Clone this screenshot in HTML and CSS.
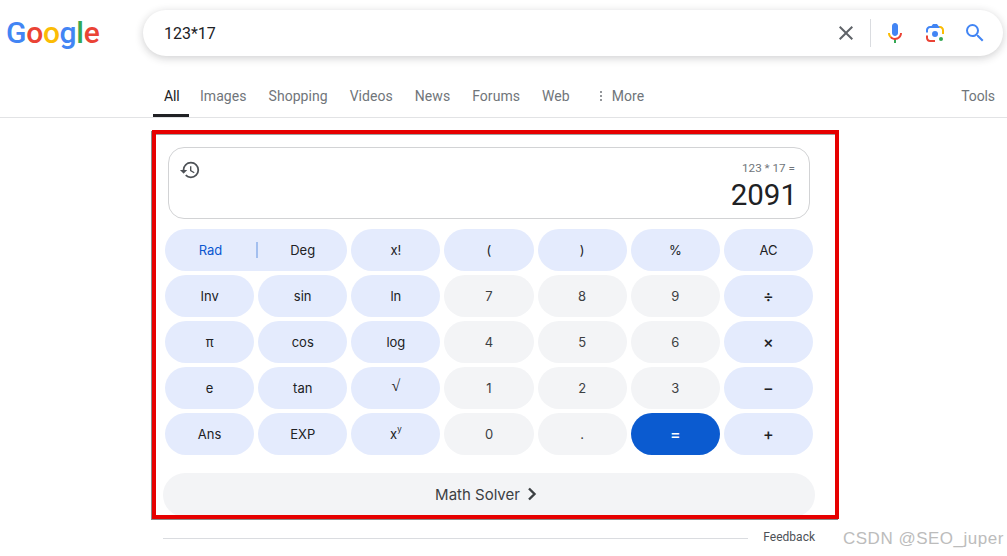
FILE: index.html
```html
<!DOCTYPE html>
<html lang="en">
<head>
<meta charset="utf-8">
<title>123*17 - Google Search</title>
<link rel="stylesheet" href="styles.css">
</head>
<body>
<header class="header">
  <div class="logo"><span class="lb">G</span><span class="lr">o</span><span class="ly">o</span><span class="lb">g</span><span class="lg">l</span><span class="lr">e</span></div>
  <div class="search">
    <span class="query">123*17</span>
    <svg class="icon close" viewBox="0 0 24 24"><path fill="#5f6368" d="M19 6.41L17.59 5 12 10.59 6.41 5 5 6.41 10.59 12 5 17.59 6.41 19 12 13.41 17.59 19 19 17.59 13.41 12z"/></svg>
    <span class="sep"></span>
    <svg class="icon" viewBox="0 0 24 24"><path fill="#4285f4" d="m12 15c1.66 0 3-1.31 3-2.97v-7.02c0-1.66-1.34-3.01-3-3.01s-3 1.34-3 3.01v7.02c0 1.66 1.34 2.97 3 2.97z"/><path fill="#34a853" d="m11 18.08h2v3.92h-2z"/><path fill="#fbbc04" d="m7.05 16.87c-1.27-1.33-2.05-2.83-2.05-4.87h2c0 1.45 0.56 2.42 1.47 3.38v0.32l-1.15 1.18z"/><path fill="#ea4335" d="m12 16.93a4.97 5.25 0 0 1 -3.54 -1.55l-1.41 1.49c1.26 1.34 3.02 2.13 4.95 2.13 3.87 0 6.99-2.92 6.99-6.99h-1.99c0 2.92-2.24 4.93-5 4.93z"/></svg>
    <svg class="icon" viewBox="0 0 192 192"><circle fill="#34a853" cx="144.07" cy="144" r="16"/><circle fill="#4285f4" cx="96.07" cy="104" r="24"/><path fill="#ea4335" d="M24,135.2c0,18.11,14.69,32.8,32.8,32.8H96v-16l-40.1-0.1c-8.8,0-15.9-8.19-15.9-17.9v-18H24V135.2z"/><path fill="#fbbc04" d="M168,72.8c0-18.11-14.69-32.8-32.8-32.8H116l20,16c8.8,0,16,8.29,16,18v30h16V72.8z"/><path fill="#4285f4" d="M112,24l-32,0L68,40H56.8C38.69,40,24,54.69,24,72.8V92h16V74c0-9.71,7.2-18,16-18h80L112,24z"/></svg>
    <svg class="icon" viewBox="0 0 24 24"><path fill="#4285f4" d="M15.5 14h-.79l-.28-.27A6.471 6.471 0 0 0 16 9.5 6.5 6.5 0 1 0 9.5 16c1.61 0 3.09-.59 4.23-1.57l.27.28v.79l5 4.99L20.49 19l-4.99-5zm-6 0C7.01 14 5 11.99 5 9.5S7.01 5 9.5 5 14 7.01 14 9.5 11.99 14 9.5 14z"/></svg>
  </div>
</header>
<nav class="tabs">
  <a class="tab active">All</a>
  <a class="tab">Images</a>
  <a class="tab">Shopping</a>
  <a class="tab">Videos</a>
  <a class="tab">News</a>
  <a class="tab">Forums</a>
  <a class="tab">Web</a>
  <a class="tab more"><span class="dots"><i></i><i></i><i></i></span>More</a>
  <a class="tab tools">Tools</a>
</nav>
<main class="calc">
  <div class="display">
    <svg class="history" viewBox="0 0 24 24"><path fill="#4d5156" d="M13 3a9 9 0 0 0-9 9H1l3.89 3.89.07.14L9 12H6c0-3.87 3.13-7 7-7s7 3.13 7 7-3.13 7-7 7c-1.93 0-3.68-.79-4.94-2.06l-1.42 1.42A8.954 8.954 0 0 0 13 21a9 9 0 0 0 0-18zm-1 5v5l4.28 2.54.72-1.21-3.5-2.08V8H12z"/></svg>
    <div class="readout">
      <div class="expr">123 * 17 =</div>
      <div class="result">2091</div>
    </div>
  </div>
  <div class="keys">
    <div class="key fn wide"><span class="rad">Rad</span><span class="bar"></span><span class="deg">Deg</span></div>
    <div class="key fn">x!</div>
    <div class="key fn">(</div>
    <div class="key fn">)</div>
    <div class="key fn">%</div>
    <div class="key fn">AC</div>
    <div class="key fn">Inv</div>
    <div class="key fn">sin</div>
    <div class="key fn">ln</div>
    <div class="key num">7</div>
    <div class="key num">8</div>
    <div class="key num">9</div>
    <div class="key fn op">÷</div>
    <div class="key fn">π</div>
    <div class="key fn">cos</div>
    <div class="key fn">log</div>
    <div class="key num">4</div>
    <div class="key num">5</div>
    <div class="key num">6</div>
    <div class="key fn op">×</div>
    <div class="key fn">e</div>
    <div class="key fn">tan</div>
    <div class="key fn root">√</div>
    <div class="key num">1</div>
    <div class="key num">2</div>
    <div class="key num">3</div>
    <div class="key fn op">−</div>
    <div class="key fn">Ans</div>
    <div class="key fn">EXP</div>
    <div class="key fn">x<sup class="sup">y</sup></div>
    <div class="key num">0</div>
    <div class="key num">.</div>
    <div class="key equals">=</div>
    <div class="key fn op">+</div>
  </div>
  <div class="solver">Math Solver<svg class="chev" viewBox="0 0 10 14"><path fill="none" stroke="#3c4043" stroke-width="2.4" d="M2 1.5 7.5 7 2 12.5"/></svg></div>
</main>
<footer class="foot">
  <span class="rule"></span>
  <span class="feedback">Feedback</span>
</footer>
<div class="watermark">CSDN @SEO_juper</div>
</body>
</html>
```
FILE: styles.css
```css
* { box-sizing: border-box; }
html, body { margin: 0; height: 100%; }
body {
  position: relative;
  height: 556px;
  overflow: hidden;
  background: #fff;
  font-family: Roboto, "Liberation Sans", sans-serif;
  color: #202124;
}
.header { display: flex; align-items: flex-start; padding: 10px 4px 0 6px; }
.logo {
  width: 137px;
  height: 46px;
  font-family: Roboto, sans-serif;
  font-size: 30px;
  line-height: 46px;
  letter-spacing: -.3px;
  font-weight: 500;
}
.lb { color: #4285f4; }
.lr { color: #ea4335; }
.ly { color: #fbbc05; }
.lg { color: #34a853; }
.search {
  flex: 1;
  height: 46px;
  display: flex;
  align-items: center;
  padding: 0 16px 0 21px;
  border-radius: 23px;
  background: #fff;
  box-shadow: 0 2px 8px rgba(32, 33, 36, .22);
}
.query { flex: 1; font-size: 16px; color: #202124; }
.icon { width: 24px; height: 24px; flex: none; margin-left: 16px; }
.close { margin-left: 0; }
.sep { width: 1px; height: 28px; background: #dadce0; margin: 0 -4px 0 12px; }
.tabs {
  display: flex;
  height: 43px;
  margin-top: 19px;
  padding-left: 153px;
  border-bottom: 1px solid #e2e3e5;
  font-size: 14px;
  letter-spacing: .05px;
  color: #70757a;
}
.tab { display: flex; align-items: center; padding: 0 11px; height: 42px; }
.active { color: #202124; border-bottom: 3px solid #202124; padding-top: 3px; width: 36px; letter-spacing: -.2px; }
.dots { display: flex; flex-direction: column; gap: 2px; width: 20px; padding-left: 8px; }
.dots i { width: 2px; height: 2px; border-radius: 50%; background: #70757a; }
.tools { margin-left: auto; padding-right: 12px; letter-spacing: -.1px; }
.calc {
  width: 687px;
  height: 389px;
  margin: 12px 0 0 152px;
  padding: 13px 0 0 9px;
  border: 4px solid #e60000;
  overflow: hidden;
  background: #fff;
  box-shadow: -1px 1px 0 #8a8a8a, inset 0 1px 0 #a0a0a0;
  font-family: Inter, "Liberation Sans", sans-serif;
}
.display {
  display: flex;
  justify-content: space-between;
  width: 642px;
  height: 72px;
  margin-left: 3px;
  padding: 12px 14px 0 11px;
  border: 1px solid #d2d3d5;
  border-radius: 16px;
}
.history { width: 22px; height: 22px; margin-left: -1px; margin-top: -1px; }
.readout { text-align: right; }
.expr { font-family: Roboto, sans-serif; font-size: 11.7px; line-height: 16px; color: #70757a; }
.result { font-family: Roboto, sans-serif; font-size: 29.5px; line-height: 36px; margin: 1px -2px 0 0; color: #202124; }
.keys {
  display: grid;
  grid-template-columns: repeat(7, 1fr);
  grid-auto-rows: 42px;
  gap: 4px;
  width: 648px;
  margin-top: 10px;
}
.key {
  display: flex;
  align-items: center;
  justify-content: center;
  border-radius: 21px;
  font-size: 13px;
  color: #202124;
}
.fn { background: #e4ebfd; }
.op { font-size: 16px; font-weight: 500; }
.root { font-family: "Liberation Serif", serif; font-size: 16px; padding-bottom: 4px; }
.num { background: #f3f4f6; color: #3c4043; }
.equals { background: #0b5bd0; color: #fff; font-size: 16px; font-weight: 500; }
.wide { grid-column: span 2; justify-content: flex-start; }
.rad { width: 91px; text-align: center; color: #0b57d0; }
.bar { width: 2px; height: 16px; background: #a3bfef; }
.deg { flex: 1; text-align: center; }
.sup { font-size: 8px; line-height: 0; align-self: flex-start; margin-top: 16px; }
.solver {
  display: flex;
  align-items: center;
  justify-content: center;
  gap: 7px;
  width: 652px;
  height: 44px;
  margin: 18px 0 0 -2px;
  padding: 0 6px 2px 0;
  border-radius: 22px;
  background: #f3f4f6;
  font-size: 15px;
  color: #3c4043;
}
.chev { width: 10px; height: 14px; }
.foot {
  display: flex;
  align-items: center;
  gap: 15px;
  width: 652px;
  margin: 11px 0 0 163px;
  font-size: 12px;
  color: #4d5156;
}
.rule { flex: 1; height: 1px; background: #dadce0; margin-top: 2px; }
.watermark {
  position: absolute;
  left: 843px;
  top: 529px;
  font-family: "Liberation Sans", sans-serif;
  font-size: 17px;
  letter-spacing: .5px;
  line-height: 20px;
  color: #bcbcbc;
}
```
